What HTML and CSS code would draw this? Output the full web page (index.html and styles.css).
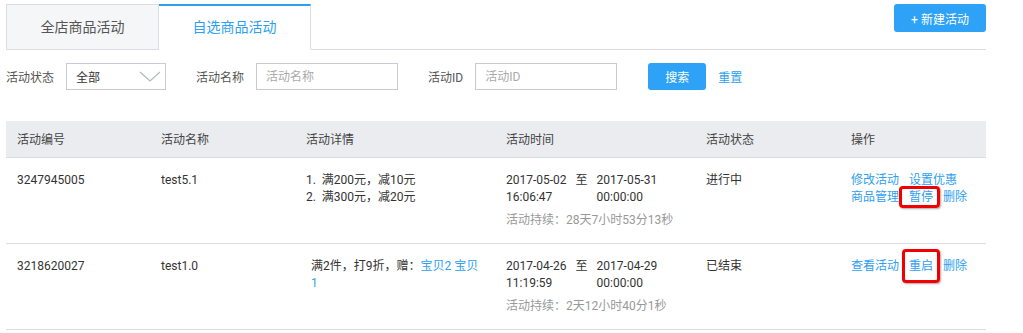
FILE: index.html
```html
<!DOCTYPE html>
<html lang="zh-CN">

<head>
    <meta charset="UTF-8">
    <title>活动管理</title>
    <link rel="stylesheet" href="styles.css">
</head>

<body>
    <div class="page">
        <div class="tab-bar">
            <ul class="tabs">
                <li>全店商品活动</li>
                <li class="active">自选商品活动</li>
            </ul>
            <button class="btn btn-new">+ 新建活动</button>
        </div>

        <div class="filter">
            <label>活动状态</label>
            <div class="select">
                <span>全部</span>
                <svg width="22" height="12" viewBox="0 0 22 12">
                    <path d="M1 1 L11 10 L21 1" fill="none" stroke="#b5b8c2" stroke-width="1.2" />
                </svg>
            </div>
            <label class="gap">活动名称</label>
            <input class="input" type="text" placeholder="活动名称">
            <label class="gap">活动ID</label>
            <input class="input" type="text" placeholder="活动ID">
            <button class="btn btn-search">搜索</button>
            <a class="reset" href="#">重置</a>
        </div>

        <table class="list">
            <colgroup>
                <col style="width: 144px">
                <col style="width: 145px">
                <col style="width: 200px">
                <col style="width: 200px">
                <col style="width: 145px">
                <col>
            </colgroup>
            <thead>
                <tr>
                    <th>活动编号</th>
                    <th>活动名称</th>
                    <th>活动详情</th>
                    <th>活动时间</th>
                    <th>活动状态</th>
                    <th>操作</th>
                </tr>
            </thead>
            <tbody>
                <tr>
                    <td>3247945005</td>
                    <td>test5.1</td>
                    <td>
                        <div>1.&nbsp; 满200元，减10元</div>
                        <div>2.&nbsp; 满300元，减20元</div>
                    </td>
                    <td>
                        <div class="time">
                            <div>2017-05-02<br>16:06:47</div>
                            <div>至</div>
                            <div>2017-05-31<br>00:00:00</div>
                        </div>
                        <div class="last">活动持续：28天7小时53分13秒</div>
                    </td>
                    <td>进行中</td>
                    <td>
                        <div class="ops">
                            <a href="#">修改活动</a><a href="#">设置优惠</a>
                        </div>
                        <div class="ops">
                            <a href="#">商品管理</a><a class="mark mark-a" href="#">暂停</a><a href="#">删除</a>
                        </div>
                    </td>
                </tr>
                <tr>
                    <td>3218620027</td>
                    <td>test1.0</td>
                    <td>
                        <div class="gift">满2件，打9折，赠：<a href="#">宝贝2</a> <a href="#">宝贝<br>1</a></div>
                    </td>
                    <td>
                        <div class="time">
                            <div>2017-04-26<br>11:19:59</div>
                            <div>至</div>
                            <div>2017-04-29<br>00:00:00</div>
                        </div>
                        <div class="last">活动持续：2天12小时40分1秒</div>
                    </td>
                    <td>已结束</td>
                    <td>
                        <div class="ops">
                            <a href="#">查看活动</a><a class="mark mark-b" href="#">重启</a><a href="#">删除</a>
                        </div>
                    </td>
                </tr>
            </tbody>
        </table>
    </div>
</body>

</html>
```

FILE: styles.css
```css
* {
    box-sizing: border-box;
}

body {
    margin: 0;
    font-family: Roboto, "Noto Sans CJK SC", sans-serif;
    font-size: 12px;
    color: #333;
    background: #fff;
}

a {
    color: #2e9ff0;
    text-decoration: none;
}

.page {
    width: 986px;
    padding: 4px 0 0 6px;
}

/* 顶部 tab */
.tab-bar {
    display: flex;
    justify-content: space-between;
    align-items: flex-start;
    border-bottom: 1px solid #dcdde2;
}

.tabs {
    display: flex;
    margin: 0 0 -1px;
    padding: 0;
    list-style: none;
}

.tabs li {
    width: 153px;
    height: 46px;
    line-height: 44px;
    text-align: center;
    font-size: 14px;
    color: #555;
    background: #f5f6f8;
    border: 1px solid #dcdde2;
}

.tabs li.active {
    width: 152px;
    color: #2e9ff0;
    background: #fff;
    border-left: none;
    border-top: 2px solid #2e9ff0;
    border-bottom-color: #fff;
    line-height: 43px;
}

.btn {
    appearance: none;
    border: none;
    border-radius: 3px;
    background: #2ea2f6;
    color: #fff;
    font-family: inherit;
    font-size: 12px;
    cursor: pointer;
}

.btn-new {
    width: 92px;
    height: 28px;
}

/* 筛选 */
.filter {
    display: flex;
    align-items: center;
    margin-top: 13px;
    height: 27px;
    color: #555;
}

.filter label {
    margin-right: 12px;
}

.filter label.gap {
    margin-left: 30px;
}

.select {
    width: 100px;
    height: 27px;
    border: 1px solid #c9cbd3;
    display: flex;
    align-items: center;
    justify-content: space-between;
    padding: 0 4px 0 9px;
    color: #333;
}

.input {
    width: 142px;
    height: 27px;
    border: 1px solid #c9cbd3;
    padding: 0 9px;
    font-family: inherit;
    font-size: 12px;
    outline: none;
}

.input::placeholder {
    color: #aaa;
}

.btn-search {
    width: 58px;
    height: 27px;
    margin-left: 31px;
}

.reset {
    margin-left: 12px;
}

/* 列表 */
.list {
    margin-top: 31px;
    width: 980px;
    border-collapse: collapse;
    table-layout: fixed;
}

.list th {
    height: 36px;
    background: #ebecf0;
    font-weight: normal;
    text-align: left;
    color: #444;
    padding: 0 0 0 11px;
    border-bottom: 1px solid #dcdde2;
}

.list td {
    vertical-align: top;
    padding: 14px 0 14px 11px;
    line-height: 17px;
    color: #333;
    border-bottom: 1px solid #dcdde2;
}

.time {
    display: flex;
    gap: 9px;
}

.last {
    margin-top: 6px;
    color: #999;
}

.gift {
    padding-left: 5px;
}

.ops a {
    margin-right: 10px;
}

.mark {
    position: relative;
}

.mark::after {
    content: "";
    position: absolute;
    border: 3px solid #f20000;
    border-radius: 4px;
    box-shadow: 1px 1px 2px rgba(0, 0, 0, 0.35);
}

.mark-a::after {
    left: -10px;
    right: -7px;
    top: -4px;
    bottom: -4px;
}

.mark-b::after {
    left: -7px;
    right: -7px;
    top: -10px;
    bottom: -10px;
}
```
